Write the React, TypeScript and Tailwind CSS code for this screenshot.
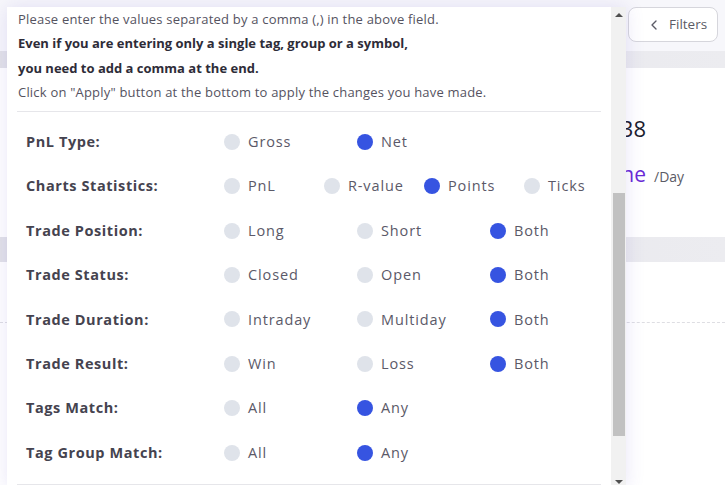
import { ChevronLeft } from "lucide-react";

type Row = { label: string; options: string[]; selected: string };

const rows: Row[] = [
  { label: "PnL Type:", options: ["Gross", "Net"], selected: "Net" },
  { label: "Charts Statistics:", options: ["PnL", "R-value", "Points", "Ticks"], selected: "Points" },
  { label: "Trade Position:", options: ["Long", "Short", "Both"], selected: "Both" },
  { label: "Trade Status:", options: ["Closed", "Open", "Both"], selected: "Both" },
  { label: "Trade Duration:", options: ["Intraday", "Multiday", "Both"], selected: "Both" },
  { label: "Trade Result:", options: ["Win", "Loss", "Both"], selected: "Both" },
  { label: "Tags Match:", options: ["All", "Any"], selected: "Any" },
  { label: "Tag Group Match:", options: ["All", "Any"], selected: "Any" },
];

function Radio({ text, checked, width }: { text: string; checked: boolean; width: string }) {
  return (
    <label className={`flex shrink-0 items-center gap-2 ${width}`}>
      <span
        className={`h-4 w-4 shrink-0 rounded-full ${checked ? "bg-[#3654e1]" : "bg-[#dfe3ea]"}`}
      />
      <span className="whitespace-nowrap text-[14.5px] tracking-[0.06em] text-[#5b5968]">{text}</span>
    </label>
  );
}

export default function App() {
  return (
    <div className="relative h-[485px] w-[725px] overflow-hidden bg-white font-['Open_Sans',sans-serif]">
      {/* Page behind the popover */}
      <div className="flex h-[51px] justify-end bg-[#f7f7fb] pr-[7px] pt-[7px]">
        <button className="flex h-[35px] w-[90px] items-center gap-[7px] rounded-lg border border-[#d6d6dc] bg-white pl-[17px] text-[13.5px] text-[#5b5b66]">
          <ChevronLeft className="h-4 w-4" strokeWidth={2} />
          Filters
        </button>
      </div>
      <div className="h-[17px] bg-gradient-to-r from-[#e2e2e8] to-[#ececf0]" />
      <div className="h-[169px] bg-white">
        {/* stat card, mostly hidden under the popover */}
        <div className="w-[646px] pt-[45px] text-right text-[22px] leading-[30px] text-[#1c1c2e]">
          38
        </div>
        <div className="flex items-baseline pt-[16px]">
          <span className="w-[646px] text-right text-[21px] text-[#6a2ad6]">ne</span>
          <span className="ml-[8px] text-[14px] text-[#5b5b66]">/Day</span>
        </div>
      </div>
      <div className="h-[25px] bg-gradient-to-r from-[#e2e2e8] to-[#ececf0]" />
      <div className="h-[61px] border-b border-dashed border-[#dedee3]" />

      {/* Filter popover */}
      <div className="absolute left-[7px] top-[7px] flex h-[482px] w-[619px] bg-white shadow-[0_0_18px_rgba(90,70,200,0.14)]">
        <div className="min-w-0 flex-1 overflow-hidden px-[10px]">
          <div className="pl-[1px] text-[13px] leading-[24.4px] tracking-[0.2px] text-[#55535f]">
            <p>Please enter the values separated by a comma (,) in the above field.</p>
            <p className="font-bold tracking-normal text-[#2e2c38]">
              Even if you are entering only a single tag, group or a symbol,
            </p>
            <p className="font-bold tracking-normal text-[#2e2c38]">you need to add a comma at the end.</p>
            <p>Click on "Apply" button at the bottom to apply the changes you have made.</p>
          </div>
          <div className="mt-[6px] border-t border-[#e6e6ea] pt-[8px]">
            {rows.map((row) => (
              <div key={row.label} className="flex h-[44.4px] items-center pl-[9px]">
                <div className="w-[198px] shrink-0 text-[14.5px] font-bold tracking-[0.04em] text-[#45434f]">
                  {row.label}
                </div>
                <div className="flex">
                  {row.options.map((opt, i) => (
                    <Radio
                      key={opt}
                      text={opt}
                      checked={opt === row.selected}
                      width={
                        i === row.options.length - 1
                          ? "w-auto"
                          : row.options.length < 4
                            ? "w-[133px]"
                            : "w-[100px]"
                      }
                    />
                  ))}
                </div>
              </div>
            ))}
          </div>
          <div className="mt-[9px] border-t border-[#e6e6ea]" />
        </div>

        {/* Scrollbar */}
        <div className="flex w-[15px] shrink-0 flex-col bg-[#f1f1f1]">
          <div className="flex h-[15px] items-center justify-center">
            <span className="h-0 w-0 border-x-[4px] border-b-[4px] border-x-transparent border-b-[#505050]" />
          </div>
          <div className="ml-[2px] mt-[171px] h-[243px] w-[12px] bg-[#c1c1c1]" />
          <div className="mt-auto flex h-[15px] items-center justify-center">
            <span className="h-0 w-0 border-x-[4px] border-t-[4px] border-x-transparent border-t-[#505050]" />
          </div>
        </div>
      </div>
    </div>
  );
}
